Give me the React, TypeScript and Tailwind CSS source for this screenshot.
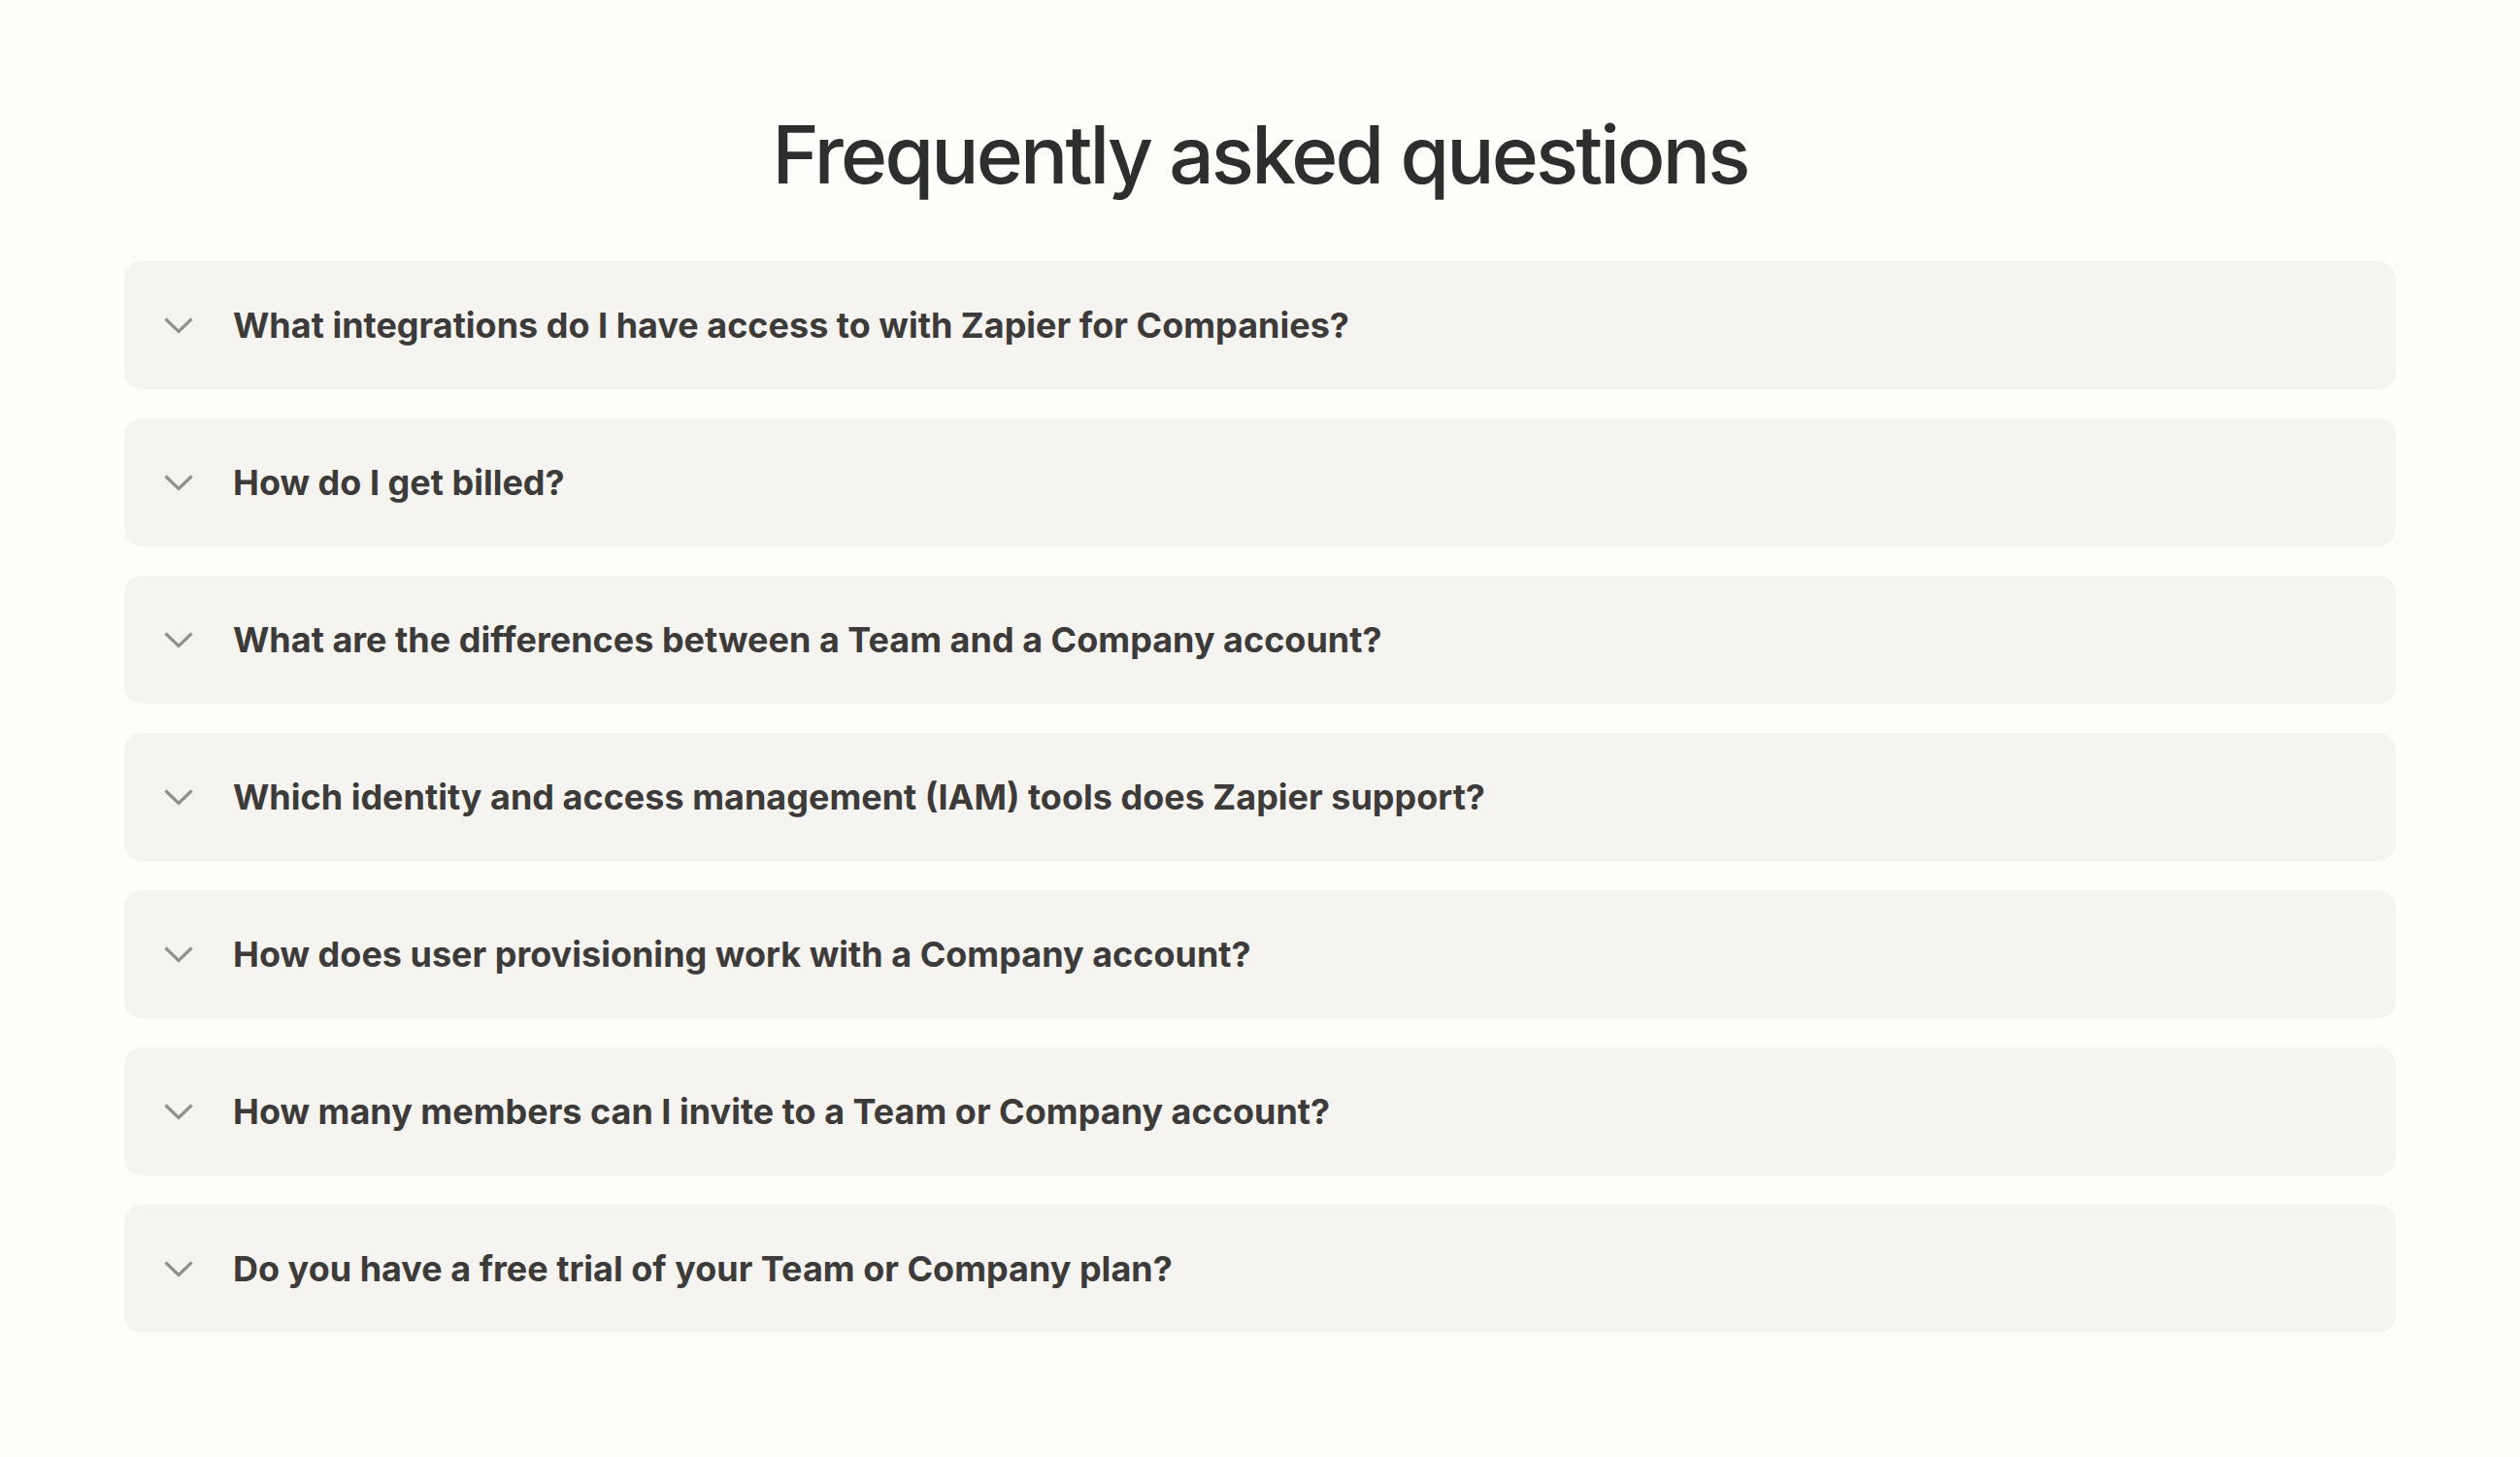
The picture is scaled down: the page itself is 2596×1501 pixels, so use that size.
const questions = [
  "What integrations do I have access to with Zapier for Companies?",
  "How do I get billed?",
  "What are the differences between a Team and a Company account?",
  "Which identity and access management (IAM) tools does Zapier support?",
  "How does user provisioning work with a Company account?",
  "How many members can I invite to a Team or Company account?",
  "Do you have a free trial of your Team or Company plan?",
];

function Chevron() {
  return (
    <svg width="30" height="20" viewBox="0 0 30 20" fill="none" aria-hidden="true">
      <path d="M1.5 3.5L15 16.5L28.5 3.5" stroke="#94918d" strokeWidth="3.2" />
    </svg>
  );
}

export default function App() {
  return (
    <div
      className="min-h-screen bg-[#fffdf9] px-[128px] pt-[110px] pb-[120px]"
      style={{ fontFamily: "Inter, 'Noto Sans', sans-serif" }}
    >
      <h1 className="text-center text-[82px] leading-[100px] font-medium tracking-[-0.035em] text-[#2d2e2e]">
        Frequently asked questions
      </h1>
      <div className="mt-[59px] flex flex-col gap-[30px]">
        {questions.map((q) => (
          <button
            key={q}
            type="button"
            className="flex h-[132px] w-full items-center rounded-[18px] bg-[#f5f4f1] pl-[41px] text-left"
          >
            <Chevron />
            <span className="ml-[41px] text-[36px] font-bold leading-[44px] text-[#3d3b39]">{q}</span>
          </button>
        ))}
      </div>
    </div>
  );
}
